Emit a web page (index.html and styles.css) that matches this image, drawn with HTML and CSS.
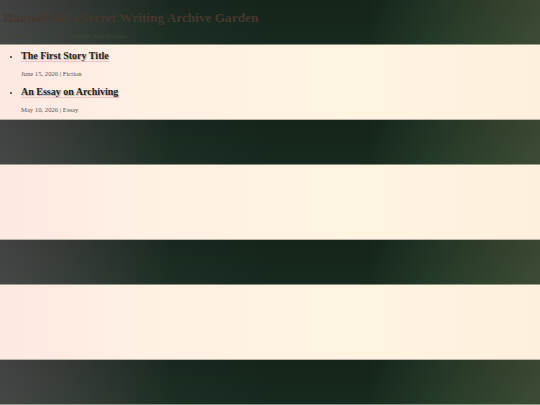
FILE: index.html
```html
<!DOCTYPE html>
<html lang="en">
<head>
<meta charset="utf-8">
<title>Hannabella's Secret Writing Archive Garden</title>
<link rel="stylesheet" href="styles.css">
</head>
<body>
<header class="site-header band-dark">
  <h1 class="site-title">Hannabella's Secret Writing Archive Garden</h1>
  <p class="site-tagline">A home for my stories, poems, and thoughts</p>
</header>
<ul class="post-list band-light">
  <li class="post">
    <h2 class="post-title">The First Story Title</h2>
    <p class="post-meta">June 15, 2026 | Fiction</p>
  </li>
  <li class="post">
    <h2 class="post-title">An Essay on Archiving</h2>
    <p class="post-meta">May 10, 2026 | Essay</p>
  </li>
</ul>
<div class="band band-dark"></div>
<div class="band band-light"></div>
<div class="band band-dark"></div>
<div class="band band-light"></div>
<div class="band band-dark"></div>
</body>
</html>
```
FILE: styles.css
```css
html, body {
  margin: 0;
  padding: 0;
}
body {
  font-family: "Liberation Serif", "Times New Roman", serif;
  background: #17261d;
  overflow: hidden;
}
.band-dark {
  background:
    linear-gradient(to bottom, rgba(0, 0, 0, 0.06), rgba(40, 90, 60, 0.08)),
    linear-gradient(to right, #464646 0%, #3a3d3a 12%, #2a342d 22%, #1b2b21 32%, #16261c 50%, #17261c 68%, #1f3224 76%, #2d3e2a 86%, #3d4a34 100%);
  border-bottom: 1px solid rgba(225, 225, 205, 0.55);
  box-sizing: border-box;
}
.band-light {
  background: linear-gradient(to right, #fde8e2 0%, #fff0e4 25%, #fff4e3 55%, #fff2e0 80%, #fef0dc 100%);
  border-bottom: 1px solid #b9b2a6;
  box-sizing: border-box;
}
.band-dark.band { height: 45px; }
.band-light.band { height: 75px; }

.site-header {
  height: 45px;
  padding: 10px 0 0 3px;
}
.site-title {
  margin: 0;
  font-size: 13.3px;
  line-height: 16px;
  font-weight: bold;
  color: #46382f;
}
.site-tagline {
  margin: 6px 0 0 7px;
  font-size: 6.67px;
  line-height: 8px;
  color: #3f4436;
}
.post-list {
  margin: 0;
  height: 75px;
  padding: 5px 0 0 21px;
  list-style: disc;
  color: #333;
  font-size: 7px;
  line-height: 12px;
}
.post::marker {
  font-size: 7px;
}
.post + .post {
  margin-top: 8px;
}
.post-title {
  width: fit-content;
  margin: 0 0 1px;
  padding-top: 1px;
  font-size: 10px;
  line-height: 10px;
  font-weight: bold;
  color: #252525;
  text-shadow: 1px 1px 1px rgba(0, 0, 0, 0.28);
  border-bottom: 1px solid #f4c4cb;
}
.post-meta {
  margin: 8px 0 0;
  font-size: 6.67px;
  line-height: 8px;
  color: #555;
}
```
